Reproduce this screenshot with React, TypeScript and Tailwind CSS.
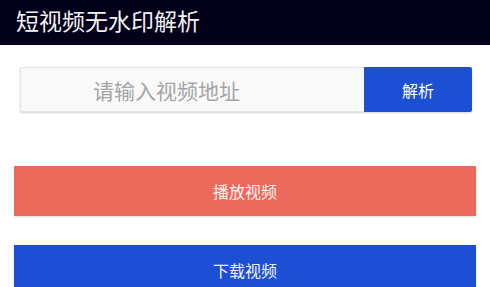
import React from 'react';

export default function App() {
  return (
    <div className="w-[490px] h-[287px] overflow-hidden bg-white font-['Noto_Sans_CJK_SC',sans-serif]">
      <header className="h-[45px] bg-[#03001a] flex items-center px-[16px]">
        <h1 className="text-[23px] leading-none text-[#f2f2f2] -mt-[4px]">短视频无水印解析</h1>
      </header>

      <div className="mt-[22px] mx-[20px] mr-[18px] flex h-[45px] shadow-[0_1px_2px_rgba(0,0,0,0.18)] rounded-[2px]">
        <input
          type="text"
          placeholder="请输入视频地址"
          className="flex-1 min-w-0 h-full bg-[#f9f9f9] border border-[#e4e4e4] border-r-0 rounded-l-[2px] pl-[72px] text-[21px] text-[#333] placeholder:text-[#a5a5a5] outline-none"
        />
        <button className="w-[108px] h-full bg-[#1c4fd4] text-white text-[16px] rounded-r-[2px]">
          解析
        </button>
      </div>

      <div className="mt-[54px] mx-[14px] flex flex-col gap-[29px]">
        <button className="h-[50px] w-full bg-[#ec6a5c] text-[#fdf2f0] text-[16px] shadow-[0_1px_2px_rgba(0,0,0,0.15)]">
          播放视频
        </button>
        <button className="h-[50px] w-full bg-[#1c4fd4] text-[#eef2fd] text-[16px] shadow-[0_1px_2px_rgba(0,0,0,0.15)]">
          下载视频
        </button>
      </div>
    </div>
  );
}
